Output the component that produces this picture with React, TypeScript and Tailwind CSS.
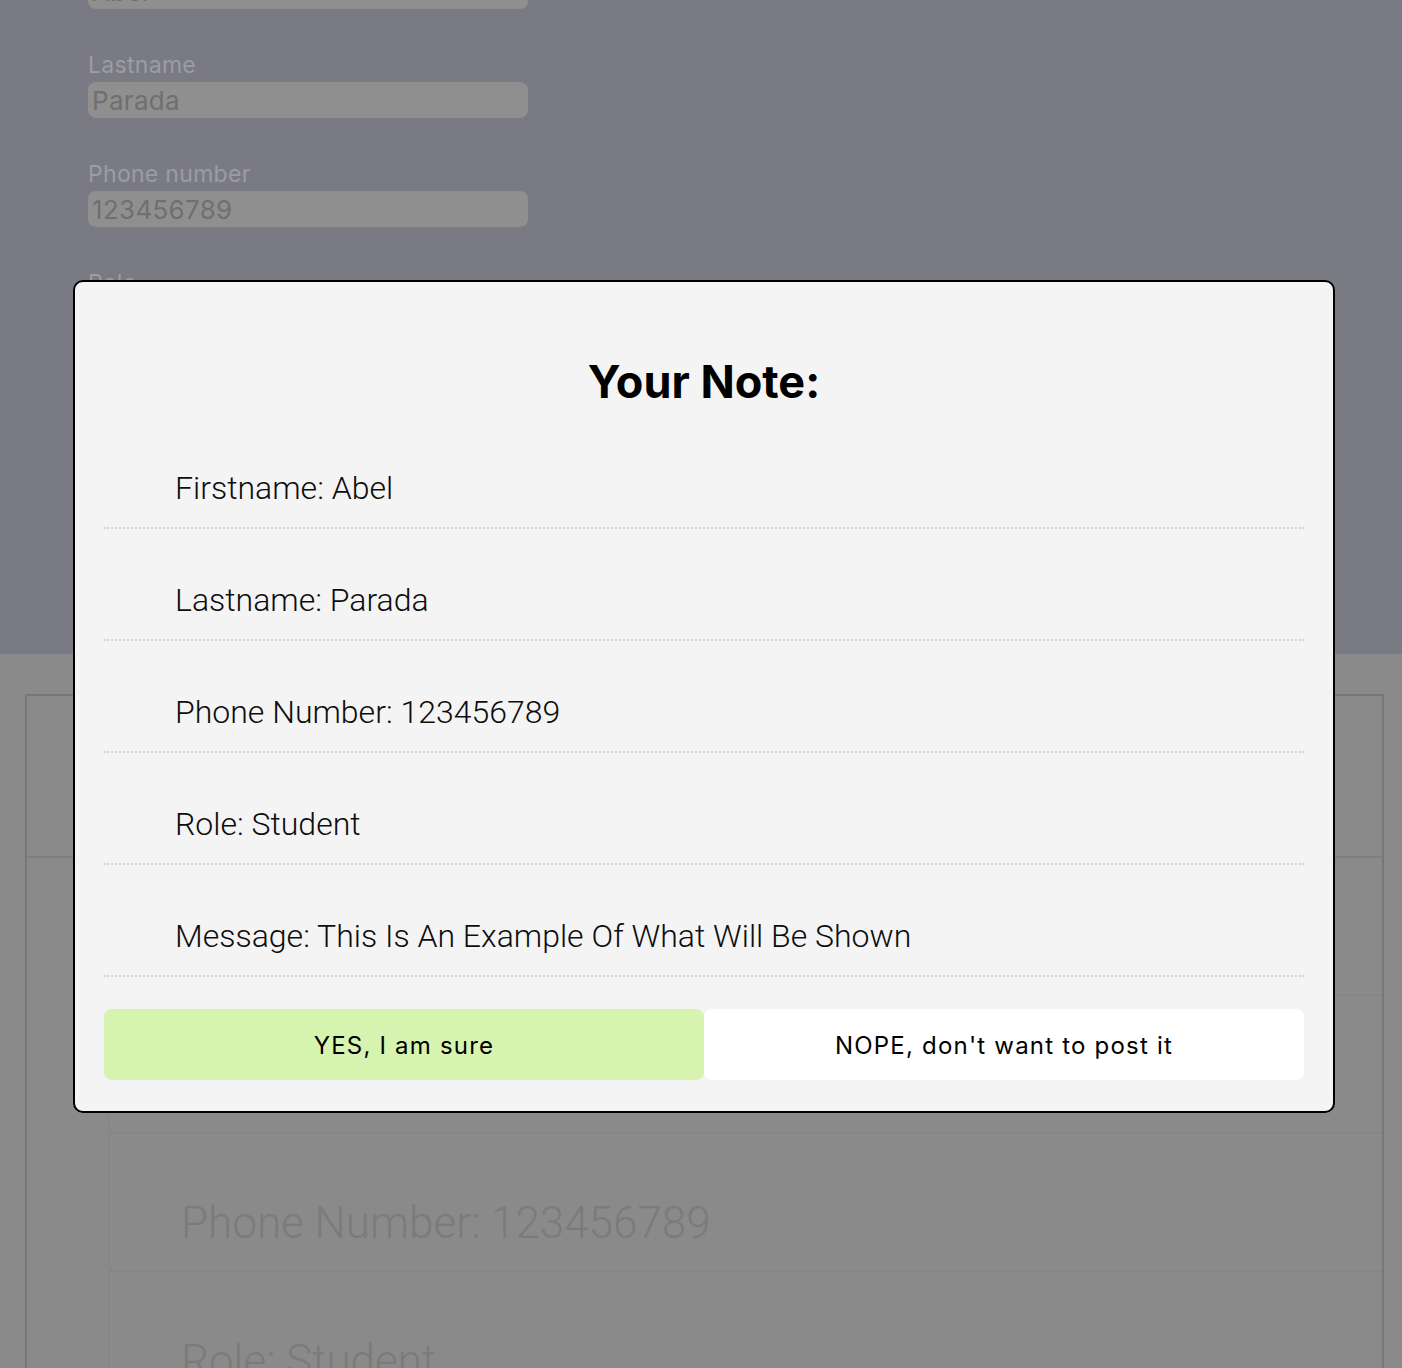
const fields = [
  { label: "Firstname", value: "Abel" },
  { label: "Lastname", value: "Parada" },
  { label: "Phone number", value: "123456789" },
  { label: "Role", value: "Student" },
  { label: "Message", value: "This is an example" },
];

const note = [
  "Firstname: Abel",
  "Lastname: Parada",
  "Phone Number: 123456789",
  "Role: Student",
  "Message: This Is An Example Of What Will Be Shown",
];

export default function App() {
  return (
    <div className="relative h-[1368px] overflow-hidden font-['Roboto',sans-serif]">
      {/* form behind the dialog */}
      <section className="h-[654px] overflow-hidden bg-[#7a7a85] pl-[88px] font-['Inter',sans-serif]">
        <div className="mt-[-57px] flex w-[440px] flex-col gap-[43px]">
          {fields.map((f) => (
            <div key={f.label} className="flex flex-col">
              <label className="text-[23px] leading-[26px] tracking-[0.3px] text-[#9c9ca3]">{f.label}</label>
              <div className="mt-1 flex h-[36px] items-center rounded-lg bg-[#8f8f8f] pl-1 text-[26px] tracking-[0.3px] text-[#6f6f6f]">
                {f.value}
              </div>
            </div>
          ))}
        </div>
      </section>

      {/* posted note behind the dialog */}
      <section className="h-[714px] bg-[#8a8a8a] pl-[25px] pr-[18px] pt-[40px]">
        <div className="h-full border-2 border-b-0 border-[#777777]">
          <div className="h-[162px] border-b-2 border-[#7f7f7f]" />
          <div className="ml-[81px] border-l-2 border-[#8c8585]">
            {note.map((n) => (
              <div
                key={n}
                className="border-b-2 border-dotted border-[#838383] pb-[14px] pl-[71px] pt-[56px] text-[44px] font-light leading-[66px] text-[#7b7b7b]"
              >
                {n}
              </div>
            ))}
          </div>
        </div>
      </section>

      {/* dialog */}
      <div className="absolute left-[73px] top-[280px] w-[1262px] rounded-[10px] border-2 border-black bg-[#f4f4f4] px-[29px] pb-[31px] pt-[73px]">
        <h2 className="mb-[9px] text-center font-['Inter',sans-serif] text-[45px] font-bold leading-[53px] text-black">
          Your Note:
        </h2>
        <div className="flex flex-col">
          {note.map((n) => (
            <div
              key={n}
              className="border-b-2 border-dotted border-[#d6d6d6] pb-[15px] pl-[71px] pt-[47px] text-[32px] font-light leading-[48px] text-[#0d0d0d]"
            >
              {n}
            </div>
          ))}
        </div>
        <div className="mt-[32px] flex font-['Inter',sans-serif] text-[24px] tracking-wider text-black">
          <button className="h-[71px] flex-1 rounded-lg bg-[#d6f4b0] pt-[2px]">YES, I am sure</button>
          <button className="h-[71px] flex-1 rounded-lg bg-white pt-[2px]">NOPE, don't want to post it</button>
        </div>
      </div>
    </div>
  );
}
